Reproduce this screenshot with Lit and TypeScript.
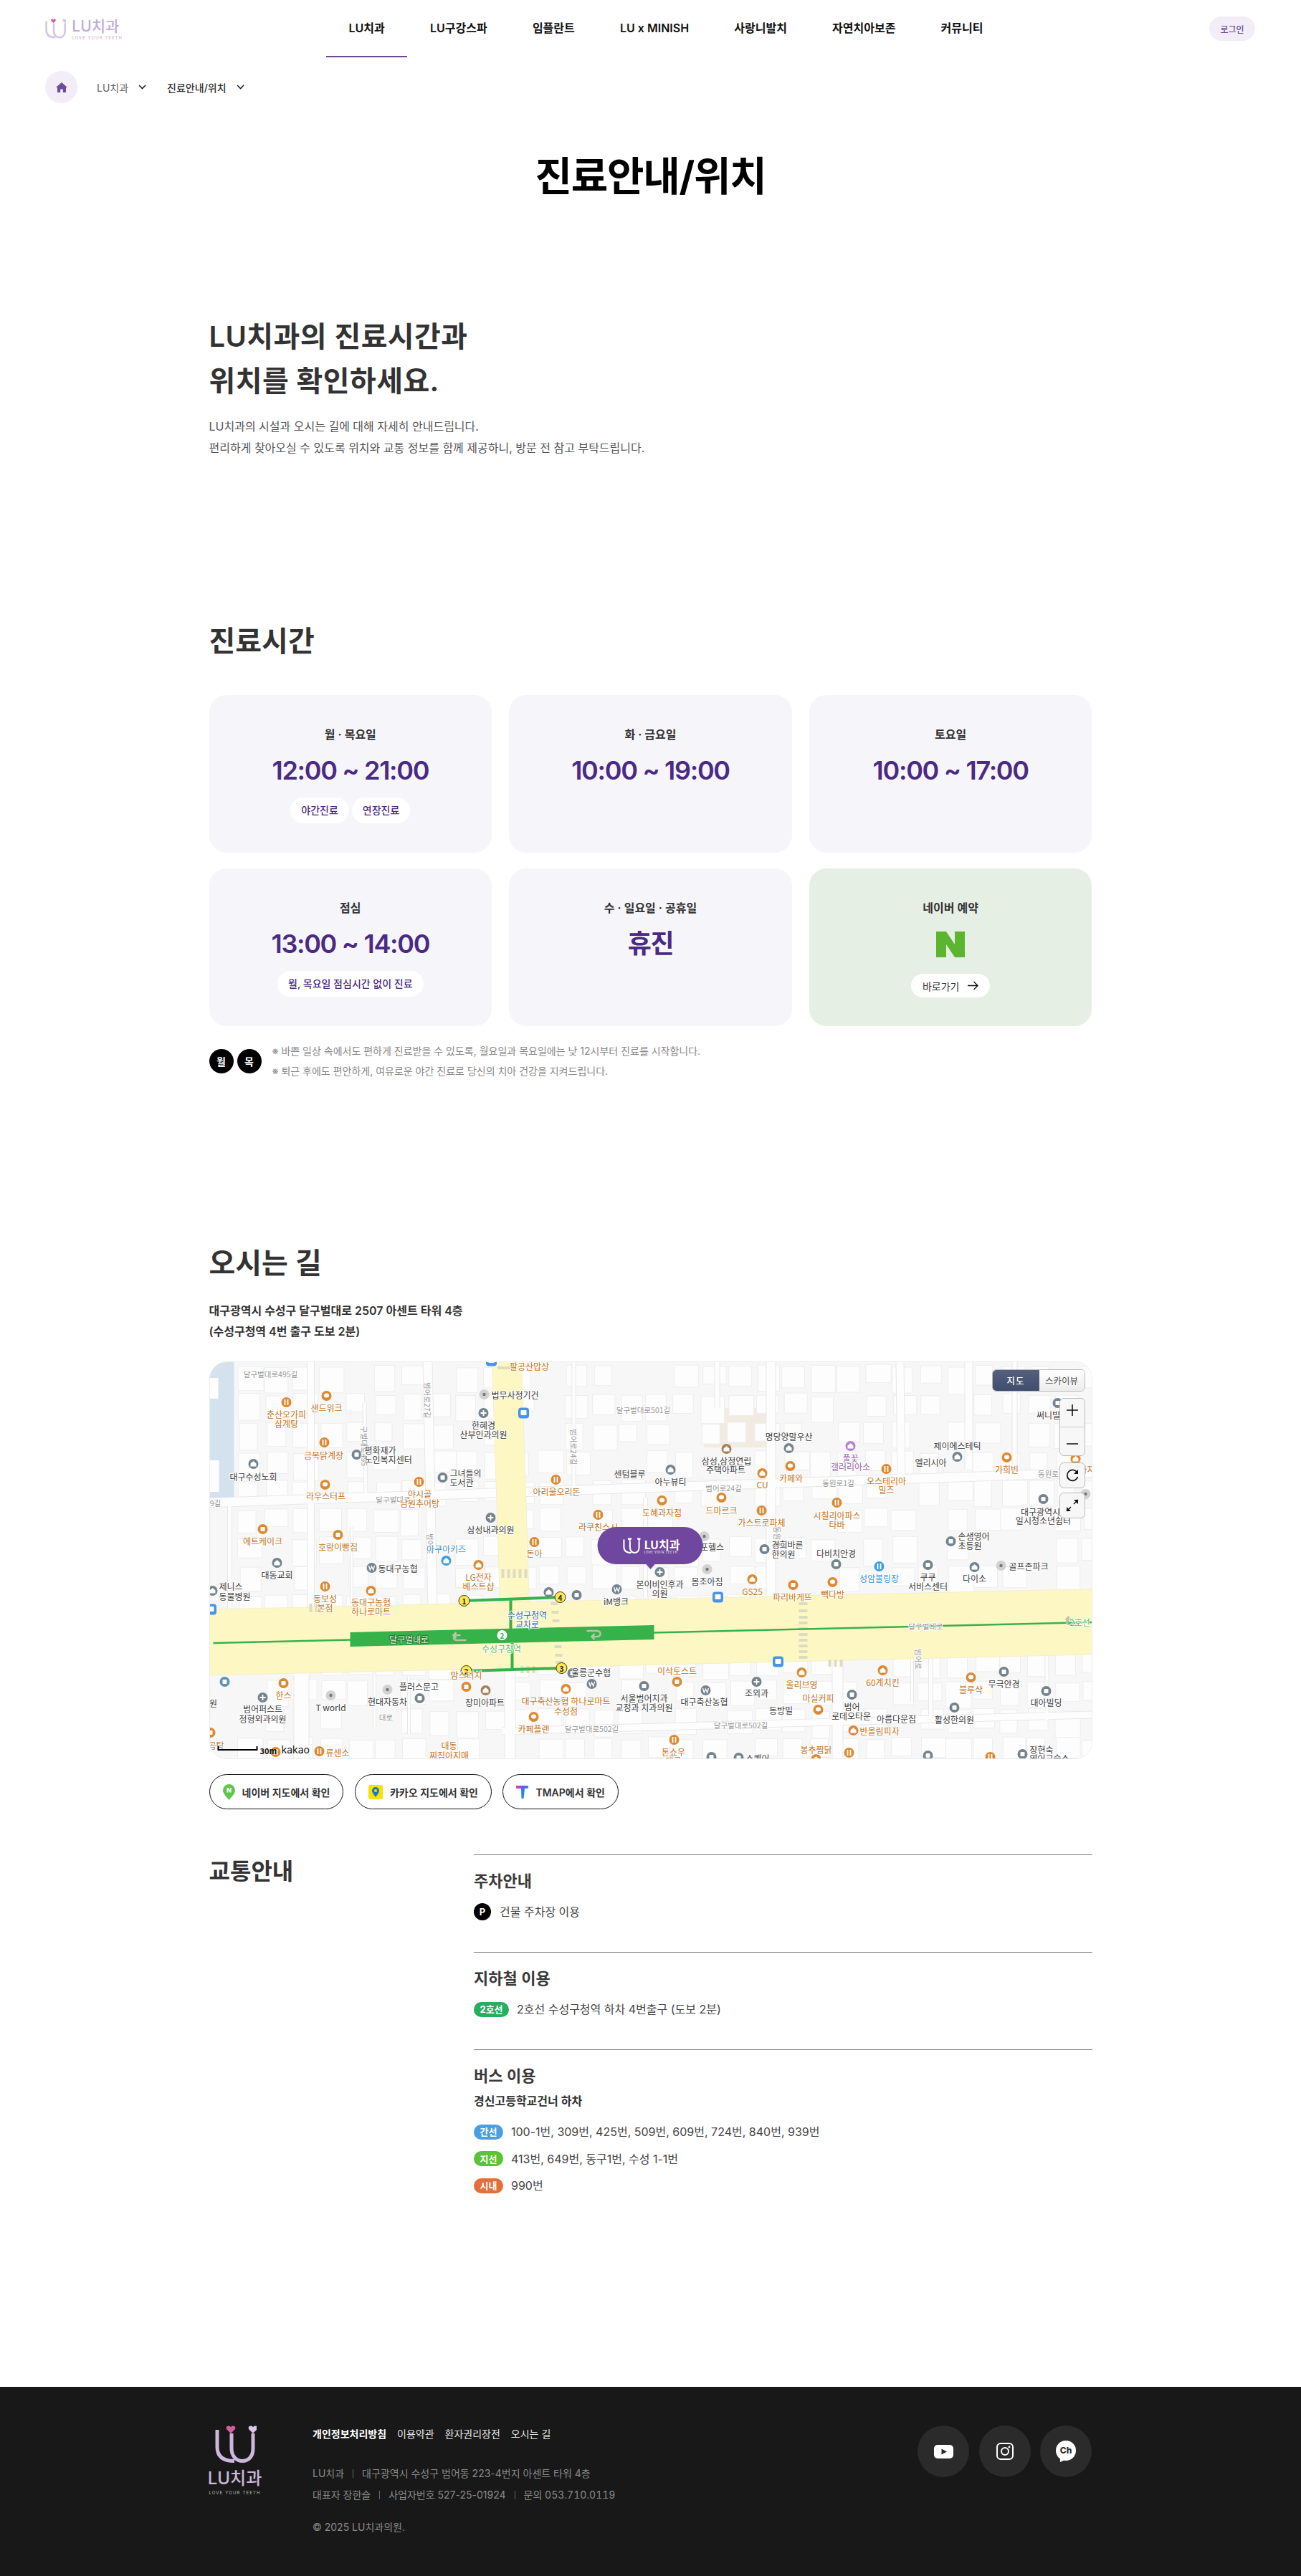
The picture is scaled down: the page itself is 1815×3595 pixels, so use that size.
import { LitElement, html, css, svg } from "lit";
import { customElement } from "lit/decorators.js";

type Lab = [number, number, string, string, string?];
type Poi = [number, number, string, string];

const OR = "#dc8a32", GR = "#74848f", BR = "#a88058", PU = "#b184c6", BL = "#3d9fe0", SL = "#5f92b3";

const POIS: Poi[] = [
  [455,1948,OR,"c"],[399,1957,OR,"f"],[452,2013,OR,"f"],[497,2030,GR,"b"],[353,2043,GR,"s"],[453,2072,OR,"c"],[584,2068,OR,"f"],
  [617,2062,GR,"b"],[775,2065,OR,"f"],[935,2051,GR,"s"],[923,2094,OR,"c"],[834,2114,OR,"f"],[684,2118,GR,"p"],[366,2134,OR,"b"],
  [471,2142,OR,"b"],[622,2178,BL,"s"],[745,2152,OR,"f"],[667,2184,OR,"s"],[920,2194,GR,"p"],[860,2218,GR,"w"],[765,2222,GR,"s"],[804,2226,GR,"b"],
  [944,2347,OR,"b"],[798,2335,GR,"b"],[674,1972,GR,"p"],
  [1186,2018,PU,"s"],[1100,2021,GR,"s"],[1013,2022,BR,"s"],[1063,2056,OR,"s"],[1102,2046,OR,"c"],[1236,2050,OR,"f"],[1335,2033,GR,"s"],[1404,2034,OR,"c"],
  [1475,1958,GR,"b"],[1500,2036,OR,"s"],[1455,2092,GR,"b"],[1326,2151,GR,"b"],[1359,2187,GR,"s"],[1294,2184,GR,"b"],[1226,2186,BL,"f"],[1166,2183,GR,"b"],
  [1066,2162,GR,"b"],[1167,2097,OR,"f"],[1006,2090,OR,"c"],[1062,2108,OR,"f"],[1049,2204,OR,"s"],[1106,2212,OR,"b"],[1161,2208,OR,"c"],
  [1118,2334,OR,"s"],[1231,2331,OR,"s"],[1354,2341,OR,"c"],[1400,2333,GR,"b"],[1459,2360,GR,"b"],[1055,2347,GR,"p"],[984,2359,GR,"w"],[1141,2386,OR,"c"],
  [1188,2365,GR,"b"],[1331,2383,GR,"b"],[1190,2415,OR,"s"],[1138,2455,OR,"s"],[1184,2446,OR,"f"],[992,2452,GR,"b"],[1030,2453,GR,"b"],[1294,2450,GR,"b"],[1381,2452,OR,"f"],[1426,2448,GR,"b"],
  [313,2347,SL,"b"],[395,2349,OR,"b"],[366,2369,GR,"p"],[585,2370,GR,"b"],[650,2354,OR,"b"],[677,2359,BR,"s"],[789,2357,OR,"s"],[825,2350,GR,"w"],[898,2353,GR,"b"],
  [744,2396,OR,"c"],[445,2444,OR,"f"],[940,2428,OR,"f"],[293,2418,OR,"b"],[384,2445,OR,"f"],[386,2181,GR,"s"],[296,2220,GR,"s"],[518,2188,GR,"w"],[453,2214,OR,"f"],[517,2220,OR,"s"],
];
const DOTS: [number, number][] = [[675,1946],[982,2144],[986,2190],[1396,2185],[461,2366],[540,2358],[1514,2085]];
const BUSES: [number, number][] = [[685,1899],[730,1972],[1001,2229],[1085,2319],[294,2246]];

const LABS: Lab[] = [
  [377,1917,"달구벌대로495길","g"],[897,1967,"달구벌대로501길","g"],[300,2097,"9길","g"],[548,2092,"달구벌대로","g"],[1009,2076,"범어로24길","g"],[1169,2069,"동원로1길","g"],[1462,2056,"동원로","g"],
  [1291,2269,"달구벌대로","g"],[1033,2407,"달구벌대로502길","g"],[825,2412,"달구벌대로502길","g"],[538,2396,"대로","g"],
  [738,1906,"팔공산맙상","o"],[718,1946,"법무사정기건","k"],[674,1988,"한혜경","k"],[674,2001,"산부인과의원","k"],
  [455,1964,"샌드위크","o"],[399,1973,"춘산오가피","o"],[399,1986,"삼계탕","o"],[451,2030,"금복닭계장","o"],[508,2023,"평화재가","k","start"],[508,2036,"노인복지센터","k","start"],
  [353,2060,"대구수성노회","k"],[454,2087,"라우스터프","o"],[585,2084,"야시골","o"],[585,2097,"남원추어탕","o"],[627,2055,"그녀들의","k","start"],[627,2068,"도서관","k","start"],
  [776,2081,"아리울오리돈","o"],[878,2056,"센텀블루","k"],[935,2067,"아누뷰티","k"],[923,2110,"도혜과자점","o"],[834,2130,"라쿠친스시","o"],[684,2134,"삼성내과의원","k"],
  [366,2150,"에트케이크","o"],[471,2158,"호랑이빵집","o"],[622,2161,"아쿠아키즈","b"],[745,2167,"돈아","o"],[667,2200,"LG전자","o"],[667,2213,"베스트샵","o"],
  [920,2210,"본이비인후과","k"],[920,2223,"의원","k"],[993,2158,"포헬스","k"],[986,2206,"몸조아짐","k"],[859,2234,"iM뱅크","k"],[735,2253,"수성구청역","t"],[735,2266,"교차로","t"],
  [824,2333,"울릉군수협","k"],[650,2337,"맘스터치","o"],[944,2331,"이삭토스트","o"],
  [1186,2034,"풀꽃","p"],[1186,2046,"갤러리아소","p"],[1100,2004,"명당양말우산","k"],[1013,2038,"삼성,삼정연립","k"],[1012,2050,"주택아파트","k"],[1063,2071,"CU","o"],[1103,2062,"카페와","o"],
  [1236,2066,"오스테리아","o"],[1236,2078,"밀즈","o"],[1335,2017,"제이에스테틱","k"],[1298,2040,"엘리시아","k"],[1404,2050,"가희빈","o"],[1462,1974,"써니빌","k"],[1516,2050,"아지","o"],
  [1451,2109,"대구광역시","k"],[1455,2121,"일시청소년쉼터","k"],[1336,2143,"손샘영어","k","start"],[1336,2156,"초등원","k","start"],[1407,2185,"골프존파크","k","start"],[1359,2202,"다이소","k"],
  [1294,2200,"쿠쿠","k"],[1294,2213,"서비스센터","k"],[1226,2202,"성암볼링장","b"],[1166,2167,"다비치안경","k"],[1076,2155,"경희바른","k","start"],[1076,2168,"한의원","k","start"],
  [1167,2114,"시칠리아파스","o"],[1167,2127,"타바","o"],[1006,2107,"드마르크","o"],[1062,2124,"가스트로파체","o"],[1049,2220,"GS25","o"],[1105,2228,"파리바게뜨","o"],[1161,2224,"빽다방","o"],
  [1118,2350,"올리브영","o"],[1231,2347,"60계치킨","o"],[1354,2357,"블루샥","o"],[1400,2349,"무극안경","k"],[1459,2375,"대아빌딩","k"],[1055,2362,"조외과","k"],[982,2374,"대구축산농협","k"],
  [1089,2386,"동방빌","k"],[1141,2369,"마실커피","o"],[1188,2381,"범어","k"],[1187,2394,"로데오타운","k"],[1250,2398,"아름다운집","k"],[1331,2399,"활성한의원","k"],[1199,2415,"반올림피자","o","start"],
  [1138,2441,"봉추찜닭","o"],[1040,2453,"스퀘어","k","start"],[1436,2441,"장현숙","k","start"],[1436,2453,"영어교습소","k","start"],
  [297,2376,"원","k"],[395,2365,"한스","o"],[366,2384,"범어퍼스트","k"],[366,2398,"정형외과의원","k"],[461,2382,"T world","k"],[540,2374,"현대자동차","k"],[584,2353,"플러스문고","k"],
  [676,2375,"장미아파트","k"],[789,2373,"대구축산농협 하나로마트","o"],[789,2387,"수성점","o"],[898,2369,"서울범어치과","k"],[898,2382,"교정과 치과의원","k"],[744,2412,"카페플랜","o"],
  [626,2435,"대동","o"],[626,2449,"찌짐아지매","o"],[454,2445,"류센소","o","start"],[939,2444,"톤쇼우","o"],[939,2456,"대구","o"],[301,2435,"곰탕","o"],
  [386,2197,"대동교회","k"],[305,2213,"제니스","k","start"],[305,2227,"동물병원","k","start"],[527,2188,"동대구농협","k","start"],[453,2230,"동보성","o"],[453,2243,"본점","o"],[517,2235,"동대구농협","o"],[517,2248,"하나로마트","o"],
];
const VLABS: [number, number, string][] = [[596,1929,"범어로27길"],[508,1990,"구벌대로495"],[800,1994,"범어로24길"],[1281,2301,"범어로"],[1084,2130,"동원로"],[600,2140,"범어로"]];

const ROADS: [string, number][] = [
  ["292,2097 1523,2055",12],["433,1900 433,2244",9],["596,1900 603,2244",12],["1075,1900 1075,2232",12],["1255,1900 1257,2068",10],["1351,1900 1351,2050",10],["1415,1900 1415,2050",6],
  ["800,1900 800,2088",4],["508,1958 510,2094",4],["420,2338 420,2455",20],["711,2330 711,2455",14],["1168,2320 1168,2455",14],["1298,2310 1298,2402",5],["1272,2312 1272,2375",3],
  ["700,2416 1523,2393",9],["522,2338 522,2410",3],["490,2130 490,2244",3],["1000,1900 1000,1965",6],["900,2090 900,2230",5],["1460,2310 1460,2400",4],["320,2100 320,2245",5],["570,2340 570,2420",3],
];

function buildings() {
  const out: [number, number, number, number][] = [];
  let s = 12345;
  const r = () => ((s = (s * 1103515245 + 12345) & 0x7fffffff) / 0x7fffffff);
  for (let y = 1904; y < 2452; y += 40) {
    for (let x = 330; x < 1520; x += 38) {
      if (r() < 0.22) { r(); continue; }
      out.push([x + r() * 5, y + r() * 5, 24 + r() * 12, 24 + r() * 14]);
    }
  }
  return out;
}
const BLD = buildings();

function glyph(x: number, y: number, k: string) {
  if (k === "f") return svg`<path class="gl" d="M${x - 2} ${y - 4}v8M${x + 2} ${y - 4}v8"/>`;
  if (k === "c") return svg`<ellipse cx=${x} cy=${y - 0.5} rx="3.6" ry="3" fill="#fff"/>`;
  if (k === "s") return svg`<path fill="#fff" d="M${x - 4} ${y - 0.5}L${x} ${y - 4}L${x + 4} ${y - 0.5}V${y + 3.5}H${x - 4}Z"/>`;
  if (k === "p") return svg`<path class="gl" d="M${x - 4} ${y}h8M${x} ${y - 4}v8"/>`;
  if (k === "w") return svg`<path class="gl thin" d="M${x - 4} ${y - 3}l1.8 6 2.2-5 2.2 5 1.8-6"/>`;
  return svg`<rect x=${x - 3} y=${y - 3} width="6" height="6" rx="1" fill="#fff"/>`;
}

function logoIcon(lu: string, h1: string, h2: string) {
  const heart = (cx: number, c: string) => svg`<path fill=${c} d="M${cx} 11C${cx - 3} 8 ${cx - 6.4} 5.6 ${cx - 6.4} 3C${cx - 6.4} .4 ${cx - 2} -.8 ${cx} 2C${cx + 2} -.8 ${cx + 6.4} .4 ${cx + 6.4} 3C${cx + 6.4} 5.6 ${cx + 3} 8 ${cx} 11Z"/>`;
  return svg`
    <path fill="none" stroke=${lu} stroke-width="5" d="M3 6V30C3 43 11 49.5 27 49.5"/>
    <path fill="none" stroke=${lu} stroke-width="5" d="M23 11V32C23 44 31 49.5 38 49.5C46 49.5 53 44 53 32V11"/>
    ${heart(22, h1)}${heart(53, h2)}`;
}

function renderMap() {
  return svg`<svg class="mapsvg" viewBox="292 1900 1231 555" width="1232" height="555">
    <rect x="292" y="1900" width="1231" height="555" fill="#f7f7f7"/>
    <rect x="292" y="1900" width="34" height="190" fill="#d3e2ec"/>
    <rect x="292" y="1923" width="12" height="29" fill="#fff"/>
    <rect x="292" y="2038" width="13" height="44" fill="#fff"/>
    <rect x="982" y="1965" width="92" height="55" fill="#f1ebe1"/>
    ${BLD.map(b => svg`<rect class="bd" x=${b[0]} y=${b[1]} width=${b[2]} height=${b[3]}/>`)}
    ${ROADS.map(r => svg`<polyline class="rdo" points=${r[0]} stroke-width=${r[1] + 2}/>`)}
    ${ROADS.map(r => svg`<polyline class="rd" points=${r[0]} stroke-width=${r[1]}/>`)}
    <polygon class="yl" points="686,1900 727,1900 738,2236 697,2236"/>
    <polygon class="yl" points="292,2246 1523,2217.5 1523,2309 292,2338"/>
    <path class="cw" d="M693 1909h24M701 2190v12M709 2190v12M717 2190v12M725 2190v12M733 2190v12"/>
    <path class="cw" d="M768 2238h10M769 2250h10M770 2262h10M771 2274h10M772 2286h10M773 2298h10M774 2310h10M775 2320h10"/>
    <path class="cw" d="M1114 2238h12M1114 2248h12M1114 2257h12M1114 2265h12M1114 2273h12M1114 2281h12M1114 2289h12M1114 2297h12M1114 2305h12M1114 2313h12"/>
    <path class="cw" d="M1157 2316v10M1165 2316v10M1173 2316v10M728 2325v10M736 2325v10M744 2325v10M433 2238v12M441 2238v12"/>
    <polyline class="ln" points="297,2293 1523,2264"/>
    <polygon fill="#36b24a" points="488,2278 912,2268 912,2288 488,2298"/>
    <path class="thick" d="M647 2234L781 2229M712 2233V2275M714 2293V2331M650 2332L783 2328"/>
    <path class="ut" d="M650 2289h-14a3 3 0 0 1 0-7h6M636 2278l-4 4 4 4"/>
    <path class="ut" d="M818 2276h15a3 3 0 0 1 0 8h-8M829 2288l-4-4 4-4"/>
    <path class="ut" d="M1505 2267h-14a3 3 0 0 1 0-7h6M1491 2256l-4 4 4 4"/>
    <circle cx="700" cy="2282" r="7" fill="#fff"/>
    <text class="tn gr" x="700" y="2282">2</text>
    <text class="lb gr2" x="699" y="2300">수성구청역</text>
    <text class="lb gr2" x="1506" y="2263">2호선</text>
    <text class="lb wh" x="570" y="2287">달구벌대로</text>
    ${[[647,2234,1],[781,2229,4],[650,2332,2],[783,2328,3]].map(e => svg`<circle cx=${e[0]} cy=${e[1]} r="7.5" fill="#fde84f" stroke="#333" stroke-width="1"/><text class="tn" x=${e[0]} y=${e[1]}>${e[2]}</text>`)}
    ${DOTS.map(d => svg`<circle cx=${d[0]} cy=${d[1]} r="7" fill="#d2d2d2"/><circle cx=${d[0]} cy=${d[1]} r="2.2" fill="#777"/>`)}
    ${POIS.map(p => svg`<circle cx=${p[0]} cy=${p[1]} r="7" fill=${p[2]}/>${glyph(p[0], p[1], p[3])}`)}
    ${BUSES.map(b => svg`<rect x=${b[0] - 7.5} y=${b[1] - 7.5} width="15" height="15" rx="4" fill="#4a93ea"/><rect x=${b[0] - 4} y=${b[1] - 4} width="8" height="7" rx="1" fill="#fff"/>`)}
    ${VLABS.map(v => svg`<text class="lb g" transform="translate(${v[0]} ${v[1]}) rotate(90)">${v[2]}</text>`)}
    ${LABS.map(l => svg`<text class="lb ${l[3]}" x=${l[0]} y=${l[1]} text-anchor=${l[4] || "middle"}>${l[2]}</text>`)}
    <path fill="none" stroke="#000" stroke-width="2" d="M304 2437V2442H358V2437"/>
    <text class="scale" x="362" y="2443">30m</text>
    <text class="kakao" x="392" y="2441">kakao</text>
    <rect x="833" y="2131" width="147" height="52" rx="26" fill="#70479f"/>
    <path fill="#70479f" d="M900 2182L907 2190L914 2182Z"/>
    <svg x="868" y="2146" width="25" height="22" viewBox="0 0 56 52">${logoIcon("#fff", "#fff", "#fff")}</svg>
    <text class="bub" x="898" y="2155">LU치과</text>
    <text class="bub2" x="898" y="2166">LOVE YOUR TEETH</text>
  </svg>`;
}

const HOURS = [
  { t: "월 · 목요일", h: "12:00 ~ 21:00", chips: ["야간진료", "연장진료"] },
  { t: "화 · 금요일", h: "10:00 ~ 19:00", chips: [] },
  { t: "토요일", h: "10:00 ~ 17:00", chips: [] },
  { t: "점심", h: "13:00 ~ 14:00", chips: ["월, 목요일 점심시간 없이 진료"] },
  { t: "수 · 일요일 · 공휴일", h: "휴진", chips: [] },
];
const NAV = ["LU치과", "LU구강스파", "임플란트", "LU x MINISH", "사랑니발치", "자연치아보존", "커뮤니티"];
const chev = html`<svg class="chev" width="11" height="7" viewBox="0 0 11 7"><path d="M1 1l4.5 4.5L10 1" fill="none" stroke="#222" stroke-width="1.6"/></svg>`;

@customElement("app-root")
export class AppRoot extends LitElement {
  static styles = css`
    :host { display: block; width: 1815px; font-family: Inter, "Noto Sans CJK KR", sans-serif; color: #333; background: #fff; }
    * { box-sizing: border-box; }
    h1, h2, h3, p { margin: 0; }
    .hdr { height: 80px; display: flex; justify-content: space-between; align-items: center; padding: 0 64px 0 63px; }
    .logo { display: flex; gap: 8px; width: 108px; height: 32px; }
    .logo-t { display: flex; flex-direction: column; color: #c2acd6; }
    .logo-t b { font-size: 21px; line-height: 26px; font-weight: 500; white-space: nowrap; }
    .logo-t i { font-style: normal; font-size: 6px; line-height: 6px; letter-spacing: 1.05px; color: #d7aacb; white-space: nowrap; }
    nav { display: flex; height: 80px; }
    nav a { padding: 0 31.6px; line-height: 78px; height: 80px; font-size: 16px; font-weight: 600; color: #111; white-space: nowrap; }
    nav a.on { border-bottom: 2px solid #6b4795; }
    .login { width: 64px; height: 34px; border-radius: 17px; background: #f2edf7; color: #6d4a95; font-size: 12px; font-weight: 500; display: flex; align-items: center; justify-content: center; }
    .crumb { display: flex; align-items: center; margin: 19px 0 0 63px; height: 45px; font-size: 14px; }
    .home { width: 45px; height: 45px; border-radius: 50%; background: #f2edf7; display: flex; align-items: center; justify-content: center; margin-right: 27px; }
    .crumb span { color: #666; margin-right: 14px; }
    .crumb span.cur { color: #333; font-weight: 500; }
    .chev { margin-right: 29px; }
    h1 { margin-top: 70px; text-align: center; font-size: 56px; line-height: 64px; font-weight: 700; color: #000; letter-spacing: -1.3px; }
    .wrap { width: 1232px; margin: 0 auto 0 291.5px; }
    .h40 { font-size: 40px; line-height: 60px; font-weight: 600; color: #333; }
    .intro { margin-top: 161px; line-height: 62px; letter-spacing: .4px; }
    .lead { margin-top: 17px; font-size: 16px; line-height: 30px; color: #555; }
    .hours-t { margin-top: 225px; }
    .grid { margin-top: 45px; display: grid; grid-template-columns: repeat(3, 1fr); column-gap: 24px; row-gap: 22px; }
    .card { height: 220px; border-radius: 24px; background: #f6f5fa; padding-top: 43px; display: flex; flex-direction: column; align-items: center; }
    .card.nv { background: #e6efe4; }
    .card h3 { font-size: 16px; line-height: 24px; font-weight: 600; color: #333; }
    .time { margin-top: 16px; font-size: 36px; line-height: 44px; font-weight: 600; color: #4a2a84; letter-spacing: -1.3px; }
    .chips { margin-top: 16px; display: flex; gap: 4px; }
    .chip { background: #fff; border-radius: 18px; padding: 7px 15px; font-size: 14px; line-height: 22px; font-weight: 500; color: #4a2a84; white-space: nowrap; }
    .nlogo { margin-top: 21px; }
    .go { margin-top: 23px; width: 110px; height: 33px; border-radius: 17px; background: #fff; display: flex; align-items: center; justify-content: center; gap: 12px; font-size: 14px; color: #333; }
    .notes { margin-top: 21px; display: flex; align-items: center; }
    .dot { width: 34px; height: 34px; border-radius: 50%; background: #000; color: #fff; font-size: 14px; font-weight: 700; display: flex; align-items: center; justify-content: center; margin-right: 5px; }
    .notes p { margin-left: 10px; font-size: 14px; line-height: 28px; color: #888; }
    .way-t { margin-top: 224px; }
    .addr { margin-top: 22px; font-size: 16px; line-height: 29px; font-weight: 600; color: #333; }
    .map { position: relative; margin-top: 27px; width: 1232px; height: 555px; border-radius: 24px; overflow: hidden; border: 1px solid #ececec; }
    .mapsvg { display: block; margin: -1px; }
    .mapsvg .bd { fill: #fdfdfd; stroke: #eeeeee; stroke-width: 1; }
    .mapsvg .rd { fill: none; stroke: #fdfdfd; }
    .mapsvg .rdo { fill: none; stroke: #e8e8e8; }
    .mapsvg .yl { fill: #fdf8c3; stroke: #ece8c4; stroke-width: .6; }
    .mapsvg .cw { fill: none; stroke: #dedcc0; stroke-width: 4; }
    .mapsvg .ln { fill: none; stroke: #36b24a; stroke-width: 2.5; }
    .mapsvg .thick { fill: none; stroke: #36b24a; stroke-width: 4; }
    .mapsvg .ut { fill: none; stroke: #b9c4a8; stroke-width: 2.5; }
    .mapsvg .gl { fill: none; stroke: #fff; stroke-width: 1.8; }
    .mapsvg .gl.thin { stroke-width: 1.3; }
    .mapsvg text { font-family: "Noto Sans CJK KR", sans-serif; dominant-baseline: central; }
    .mapsvg .lb { font-size: 12px; paint-order: stroke; stroke: rgba(255,255,255,.85); stroke-width: 2px; }
    .mapsvg .tn { font-size: 10px; font-weight: 700; text-anchor: middle; fill: #222; }
    .mapsvg .tn.gr { fill: #36b24a; }
    .mapsvg .o { fill: #c8741c; }
    .mapsvg .k { fill: #3c3c3c; }
    .mapsvg .g { fill: #999; font-size: 10.5px; }
    .mapsvg .b { fill: #3d95cf; }
    .mapsvg .p { fill: #9c66b4; }
    .mapsvg .t { fill: #2c6a9c; }
    .mapsvg .gr2 { fill: #5cc46c; text-anchor: middle; }
    .mapsvg .wh { fill: #e6efe0; text-anchor: middle; stroke: rgba(30,110,40,.8); }
    .mapsvg .scale { font-size: 11px; font-weight: 700; fill: #111; }
    .mapsvg .kakao { font-family: Inter, sans-serif; font-size: 14px; fill: #111; }
    .mapsvg .bub { font-size: 16px; font-weight: 600; fill: #fff; }
    .mapsvg .bub2 { font-size: 4.5px; letter-spacing: .55px; fill: #fff; }
    .type { position: absolute; left: 1091px; top: 10px; width: 130px; height: 31px; display: flex; border: 1px solid #b9b9b9; border-radius: 6px; overflow: hidden; font-size: 12.5px; }
    .type b { width: 65px; background: linear-gradient(#55607f, #414d6c); color: #fff; font-weight: 500; letter-spacing: 1px; display: flex; align-items: center; justify-content: center; }
    .type span { flex: 1; background: linear-gradient(#fff, #ececec); color: #555; display: flex; align-items: center; justify-content: center; }
    .ctl { position: absolute; left: 1185px; width: 36px; border: 1px solid #bbb; border-radius: 6px; background: #f7f7f7; display: flex; flex-direction: column; align-items: center; justify-content: center; }
    .c1 { top: 50px; height: 81px; justify-content: space-around; }
    .c1 hr { width: 100%; margin: 0; border: 0; border-top: 1px solid #ccc; }
    .c2 { top: 140px; height: 36px; }
    .c3 { top: 182px; height: 36px; }
    .btns { margin-top: 21px; display: flex; gap: 15.5px; }
    .btn { height: 49px; padding: 0 18px; border: 1px solid #111; border-radius: 25px; display: flex; align-items: center; gap: 10px; font-size: 14px; font-weight: 600; color: #333; white-space: nowrap; }
    .trans { margin-top: 63px; display: flex; }
    .trans > h2 { width: 369.5px; font-size: 32px; line-height: 48px; font-weight: 600; color: #333; }
    .tcol { flex: 1; }
    .tb { border-top: 1px solid #777; padding-top: 20px; }
    .tb h3 { font-size: 22px; line-height: 33px; font-weight: 600; color: #3a3a3a; }
    .row { display: flex; align-items: center; font-size: 16px; line-height: 24px; color: #444; }
    .p1 { height: 136px; }
    .p1 .row { margin-top: 14px; gap: 12px; }
    .p2 { height: 136px; }
    .p2 .row { margin-top: 14px; gap: 11px; }
    .p-ic { width: 24px; height: 24px; border-radius: 50%; background: #000; color: #fff; font-size: 13px; font-weight: 700; display: flex; align-items: center; justify-content: center; }
    .pill { height: 21px; border-radius: 11px; color: #fff; font-size: 13px; font-weight: 700; display: flex; align-items: center; justify-content: center; flex: none; }
    .sub { font-size: 16px; line-height: 24px; font-weight: 600; color: #333; margin-top: 6px; }
    .p3 .row { gap: 11px; height: 37.5px; }
    .p3 .rows { margin-top: 12.5px; }
    footer { margin-top: 262px; height: 264px; background: #181818; padding: 54px 292px 0 291px; display: flex; }
    .flogo { width: 73px; display: flex; flex-direction: column; align-items: center; color: #cbb8dc; }
    .flogo b { font-size: 24px; line-height: 30px; font-weight: 500; margin-top: 7px; white-space: nowrap; }
    .flogo i { font-style: normal; font-size: 6px; line-height: 8px; letter-spacing: 1.15px; color: #bbb; white-space: nowrap; margin-top: 1px; }
    .ftxt { margin-left: 72px; padding-top: 2px; }
    .flinks { display: flex; gap: 15px; font-size: 14px; line-height: 20px; color: #e6e6e6; }
    .flinks b { color: #fff; font-weight: 700; }
    .finfo { margin-top: 30px; font-size: 14px; line-height: 30px; color: #8a8a8a; }
    .finfo div { display: flex; align-items: center; }
    .finfo s { width: 1px; height: 12px; background: #666; margin: 0 12px; }
    .tnum { font-variant-numeric: tabular-nums; }
    .copy { margin-top: 20px; font-size: 14px; line-height: 20px; color: #8a8a8a; }
    .soc { margin-left: auto; display: flex; gap: 13.5px; }
    .soc div { width: 72px; height: 72px; border-radius: 50%; background: #2b2b2b; display: flex; align-items: center; justify-content: center; }
    .ch { font-family: Inter, sans-serif; font-size: 12px; font-weight: 800; fill: #2b2b2b; text-anchor: middle; }
  `;

  render() {
    return html`
      <header class="hdr">
        <div class="logo">
          <svg width="35" height="32" viewBox="0 0 56 52">${logoIcon("#d4c6e2", "#d1619c", "#d4c6e2")}</svg>
          <div class="logo-t"><b>LU치과</b><i>LOVE YOUR TEETH</i></div>
        </div>
        <nav>${NAV.map((n, i) => html`<a class=${i === 0 ? "on" : ""}>${n}</a>`)}</nav>
        <div class="login">로그인</div>
      </header>
      <div class="crumb">
        <div class="home"><svg width="16" height="14" viewBox="0 0 16 14"><path fill="#6f4a9f" d="M8 0L16 7H14V14H9.8V9.5H6.2V14H2V7H0Z"/></svg></div>
        <span>LU치과</span>${chev}<span class="cur">진료안내/위치</span>${chev}
      </div>
      <h1>진료안내/위치</h1>
      <div class="wrap">
        <h2 class="h40 intro">LU치과의 진료시간과<br />위치를 확인하세요.</h2>
        <p class="lead">LU치과의 시설과 오시는 길에 대해 자세히 안내드립니다.<br />편리하게 찾아오실 수 있도록 위치와 교통 정보를 함께 제공하니, 방문 전 참고 부탁드립니다.</p>
        <h2 class="h40 hours-t">진료시간</h2>
        <div class="grid">
          ${HOURS.map(c => html`<div class="card">
            <h3>${c.t}</h3>
            <div class="time">${c.h}</div>
            ${c.chips.length ? html`<div class="chips">${c.chips.map(x => html`<span class="chip">${x}</span>`)}</div>` : ""}
          </div>`)}
          <div class="card nv">
            <h3>네이버 예약</h3>
            <svg class="nlogo" width="40" height="36" viewBox="0 0 40 36"><path fill="#5cb531" d="M0 0H14L26 18V0H40V36H26L14 18V36H0Z"/></svg>
            <div class="go">바로가기<svg width="15" height="13" viewBox="0 0 15 13"><path d="M0 6.5H14M8.5 1L14 6.5L8.5 12" fill="none" stroke="#111" stroke-width="1.4"/></svg></div>
          </div>
        </div>
        <div class="notes">
          <div class="dot">월</div><div class="dot">목</div>
          <p>※ 바쁜 일상 속에서도 편하게 진료받을 수 있도록, 월요일과 목요일에는 낮 12시부터 진료를 시작합니다.<br />※ 퇴근 후에도 편안하게, 여유로운 야간 진료로 당신의 치아 건강을 지켜드립니다.</p>
        </div>
        <h2 class="h40 way-t">오시는 길</h2>
        <p class="addr">대구광역시 수성구 달구벌대로 2507 아센트 타워 4층<br />(수성구청역 4번 출구 도보 2분)</p>
        <div class="map">
          ${renderMap()}
          <div class="type"><b>지도</b><span>스카이뷰</span></div>
          <div class="ctl c1">
            <svg width="16" height="16" viewBox="0 0 16 16"><path d="M8 0V16M0 8H16" stroke="#111" stroke-width="1.6"/></svg>
            <hr />
            <svg width="16" height="16" viewBox="0 0 16 16"><path d="M0 8H16" stroke="#111" stroke-width="1.6"/></svg>
          </div>
          <div class="ctl c2"><svg width="18" height="18" viewBox="0 0 18 18"><path d="M16 5.5A7.5 7.5 0 1 0 16.5 11" fill="none" stroke="#111" stroke-width="1.6"/><path d="M17 1V7H11Z" fill="#111"/></svg></div>
          <div class="ctl c3"><svg width="18" height="18" viewBox="0 0 18 18"><path d="M11 7L17 1M1 17L7 11" stroke="#111" stroke-width="1.5"/><path d="M11 1H17V7ZM1 11V17H7Z" fill="#111"/></svg></div>
        </div>
        <div class="btns">
          <div class="btn"><svg width="17" height="22" viewBox="0 0 17 22"><path fill="#5fc84a" d="M8.5 0A8.5 8.5 0 0 1 17 8.5C17 13 12 18 8.5 22C5 18 0 13 0 8.5A8.5 8.5 0 0 1 8.5 0Z"/><path fill="#fff" d="M5.5 5H7.5L9.8 8.6V5H11.6V11.5H9.6L7.3 8V11.5H5.5Z"/></svg>네이버 지도에서 확인</div>
          <div class="btn"><svg width="20" height="20" viewBox="0 0 20 20"><rect width="20" height="20" rx="3" fill="#fbe100"/><path fill="#1678d2" d="M10 3A5 5 0 0 1 15 8C15 11 12 14 10 17C8 14 5 11 5 8A5 5 0 0 1 10 3Z"/><circle cx="10" cy="8" r="2" fill="#fbe100"/></svg>카카오 지도에서 확인</div>
          <div class="btn"><svg width="17" height="18" viewBox="0 0 17 18"><defs><linearGradient id="tm" x1="0" x2="1" y1="0" y2="0"><stop offset="0" stop-color="#e23bc8"/><stop offset=".55" stop-color="#7a4cf0"/><stop offset="1" stop-color="#2f8cf0"/></linearGradient></defs><path fill="url(#tm)" d="M0 0H17V4H0Z"/><path fill="#1e88e8" d="M7 4H12L10.5 18H7.5Z"/></svg>TMAP에서 확인</div>
        </div>
        <div class="trans">
          <h2>교통안내</h2>
          <div class="tcol">
            <div class="tb p1"><h3>주차안내</h3><div class="row"><span class="p-ic">P</span>건물 주차장 이용</div></div>
            <div class="tb p2"><h3>지하철 이용</h3><div class="row"><span class="pill" style="width:49px;background:#27ae60">2호선</span>2호선 수성구청역 하차 4번출구 (도보 2분)</div></div>
            <div class="tb p3"><h3>버스 이용</h3><div class="sub">경신고등학교건너 하차</div>
              <div class="rows">
                <div class="row"><span class="pill" style="width:41px;background:#4b9fe1">간선</span>100-1번, 309번, 425번, 509번, 609번, 724번, 840번, 939번</div>
                <div class="row"><span class="pill" style="width:41px;background:#5cc236">지선</span>413번, 649번, 동구1번, 수성 1-1번</div>
                <div class="row"><span class="pill" style="width:41px;background:#e2703a">시내</span>990번</div>
              </div>
            </div>
          </div>
        </div>
      </div>
      <footer>
        <div class="flogo">
          <svg width="60" height="52" viewBox="0 0 56 52">${logoIcon("#cbb8dc", "#d1619c", "#d8c6e4")}</svg>
          <b>LU치과</b><i>LOVE YOUR TEETH</i>
        </div>
        <div class="ftxt">
          <div class="flinks"><b>개인정보처리방침</b><span>이용약관</span><span>환자권리장전</span><span>오시는 길</span></div>
          <div class="finfo">
            <div>LU치과<s></s>대구광역시 수성구 범어동 223-4번지 아센트 타워 4층</div>
            <div>대표자 장한슬<s></s>사업자번호 527-25-01924<s></s><span class="tnum">문의 053.710.0119</span></div>
          </div>
          <div class="copy">© 2025 LU치과의원.</div>
        </div>
        <div class="soc">
          <div><svg width="27" height="19" viewBox="0 0 27 19"><rect width="27" height="19" rx="5" fill="#fff"/><path d="M10.5 5.5L18 9.5L10.5 13.5Z" fill="#2b2b2b"/></svg></div>
          <div><svg width="24" height="24" viewBox="0 0 24 24"><rect x="1" y="1" width="22" height="22" rx="5" fill="none" stroke="#fff" stroke-width="2"/><circle cx="12" cy="12" r="5" fill="none" stroke="#fff" stroke-width="2"/><circle cx="18" cy="6" r="1.4" fill="#fff"/></svg></div>
          <div><svg width="28" height="30" viewBox="0 0 28 30"><circle cx="14" cy="14" r="14" fill="#fff"/><path d="M6 22L6 30L15 26Z" fill="#fff"/><text class="ch" x="14" y="18">Ch</text></svg></div>
        </div>
      </footer>
    `;
  }
}
